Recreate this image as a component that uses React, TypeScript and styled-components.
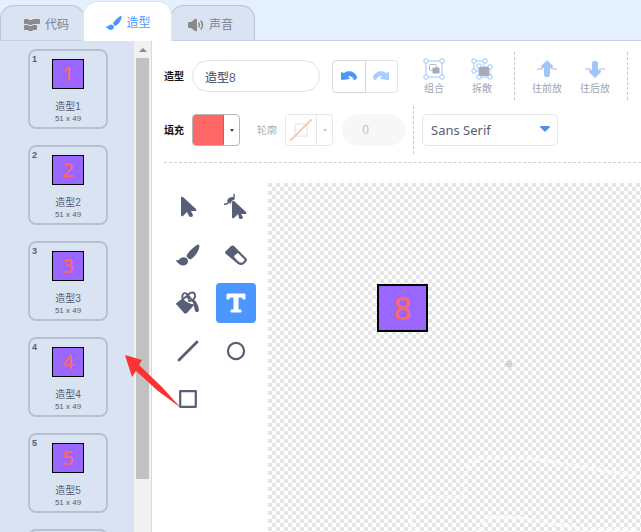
import React from "react";
import styled, { createGlobalStyle, css } from "styled-components";

const ink = "#575e75";
const blue = "#4c97ff";

const GlobalStyle = createGlobalStyle`
  *, *::before, *::after { box-sizing: border-box; }
  body {
    margin: 0;
    background: #fff;
    color: ${ink};
    font-family: "Liberation Sans", "Noto Sans CJK SC", sans-serif;
  }
  button, input, select { font: inherit; color: inherit; margin: 0; }
  button { cursor: pointer; }
  svg { display: block; flex: none; }
`;

const Page = styled.div`
  position: relative;
  display: flex;
  flex-direction: column;
  height: 100vh;
  overflow: hidden;
`;

const TabBar = styled.nav`
  display: flex;
  align-items: flex-end;
  flex: none;
  height: 41px;
  background: #e5f0ff;
  border-bottom: 1px solid #c9d2e0;
`;

const Tab = styled.button<{ $active?: boolean }>`
  display: flex;
  align-items: center;
  justify-content: center;
  gap: 4px;
  width: 85px;
  height: 35px;
  padding: 3px 0 0 8px;
  border: 1px solid #bac5d8;
  border-bottom: 0;
  border-radius: 14px 14px 0 0;
  background: #d9e3f2;
  color: #7a8195;
  font-size: 12px;
  line-height: 16px;
  & + & { margin-left: -2px; }
  &:last-child { padding: 3px 4px 0 0; }
  ${({ $active }) =>
    $active &&
    css`
      z-index: 1;
      width: 89px;
      height: 40px;
      padding: 3px 0 0 2px;
      margin-bottom: -1px;
      border-color: #dfe6f0;
      background: #fff;
      color: ${blue};
    `}
`;

const Body = styled.div`
  display: flex;
  flex: 1;
  min-height: 0;
`;

const Sidebar = styled.aside`
  display: flex;
  flex: none;
  width: 152px;
  background: #f1f1f1;
  border-right: 1px solid #d5dae2;
`;

const CostumeList = styled.ul`
  display: flex;
  flex-direction: column;
  align-items: center;
  gap: 16px;
  width: 134px;
  margin: 0;
  padding: 8px 0 0 2px;
  overflow: hidden;
  list-style: none;
  background: #d9e3f2;
`;

const CostumeCard = styled.button`
  position: relative;
  display: flex;
  flex-direction: column;
  align-items: center;
  width: 80px;
  height: 80px;
  padding: 8px 0 0;
  border: 2px solid #b6c1d3;
  border-radius: 8px;
  background: transparent;
`;

const CardIndex = styled.span`
  position: absolute;
  top: 2px;
  left: 2px;
  font-size: 9px;
  font-weight: 700;
  line-height: 12px;
`;

const DigitBox = styled.span<{ $large?: boolean }>`
  display: flex;
  align-items: center;
  justify-content: center;
  width: ${({ $large }) => ($large ? 51 : 32)}px;
  height: ${({ $large }) => ($large ? 48 : 30)}px;
  border: ${({ $large }) => ($large ? 2 : 1)}px solid #000;
  background: #9966ff;
  color: #ff6666;
  font-family: "Noto Sans", sans-serif;
  font-size: ${({ $large }) => ($large ? 32 : 20)}px;
  font-weight: 500;
  line-height: 1;
`;

const CardName = styled.span`
  margin-top: 12px;
  font-size: 10px;
  line-height: 12px;
`;

const CardSize = styled.span`
  font-size: 8px;
  line-height: 12px;
`;

const ScrollTrack = styled.div`
  display: flex;
  flex-direction: column;
  align-items: center;
  width: 17px;
  padding-top: 7px;
`;

const ScrollThumb = styled.div`
  width: 13px;
  height: 87%;
  margin-top: 6px;
  background: #c1c1c1;
`;

const Editor = styled.main`
  display: flex;
  flex-direction: column;
  flex: 1;
  min-width: 0;
  padding-left: 12px;
`;

const Toolbar = styled.div`
  display: flex;
  flex-direction: column;
  gap: 6px;
  padding: 11px 0 8px;
  border-bottom: 1px dashed #d0d0d0;
`;

const ToolbarRow = styled.div`
  display: flex;
  align-items: center;
  height: 48px;
`;

const FieldLabel = styled.label<{ $muted?: boolean }>`
  flex: none;
  width: 28px;
  padding-top: 2px;
  font-size: 10px;
  font-weight: ${({ $muted }) => ($muted ? 400 : 700)};
  line-height: 16px;
  color: ${({ $muted }) => ($muted ? "#b0b0b0" : "#111")};
  ${({ $muted }) => $muted && "margin-left: 17px;"}
`;

const NameInput = styled.input`
  width: 128px;
  height: 32px;
  padding: 0 12px;
  border: 1px solid #e2e2e6;
  border-radius: 16px;
  outline: 0;
  background: #fff;
  font-size: 12px;
  font-weight: 500;
`;

const ButtonPair = styled.div`
  display: flex;
  width: 66px;
  height: 33px;
  margin: 0 12px;
`;

const HistoryButton = styled.button`
  display: flex;
  align-items: center;
  justify-content: center;
  flex: 1;
  padding: 0;
  border: 1px solid #d2d5db;
  border-radius: 4px 0 0 4px;
  background: #fff;
  &:disabled {
    border-color: #e2e5ec;
    border-left: 0;
    border-radius: 0 4px 4px 0;
    cursor: default;
  }
`;

const ActionButton = styled.button`
  display: flex;
  flex-direction: column;
  align-items: center;
  gap: 2px;
  flex: none;
  width: 48px;
  padding: 2px 0 0;
  border: 0;
  background: none;
  color: #a2a5ae;
  font-size: 10px;
  line-height: 14px;
`;

const Divider = styled.div`
  flex: none;
  width: 1px;
  height: 48px;
  margin: 0 8px;
  border-left: 1px dashed #c8c8c8;
`;

const SwatchButton = styled.button<{ $faded?: boolean }>`
  display: flex;
  flex: none;
  width: 48px;
  height: 32px;
  padding: 0;
  overflow: hidden;
  border: 1px solid ${({ $faded }) => ($faded ? "#e4e6ea" : "#b9b4b6")};
  border-radius: 4px;
  background: #fff;
`;

const SwatchColor = styled.span<{ $color: string; $edge: string }>`
  display: flex;
  align-items: center;
  justify-content: center;
  width: 31px;
  height: 30px;
  border-right: 1px solid ${({ $edge }) => $edge};
  background: ${({ $color }) => $color};
`;

const SwatchCaret = styled.span<{ $faded?: boolean }>`
  align-self: center;
  margin: 0 auto;
  border: 2px solid transparent;
  border-top: 3px solid ${({ $faded }) => ($faded ? "#c5c5c5" : "#444")};
  border-bottom: 0;
`;

const WidthInput = styled.input`
  width: 63px;
  height: 32px;
  margin-left: 9px;
  padding: 0 16px 0 0;
  border: 0;
  border-radius: 16px;
  background: #f7f7f7;
  color: #c2c2c2;
  font-size: 12px;
  text-align: center;
`;

const SelectWrap = styled.div`
  position: relative;
  width: 136px;
  svg { position: absolute; top: 12px; right: 8px; pointer-events: none; }
`;

const FontSelect = styled.select`
  appearance: none;
  display: block;
  width: 100%;
  height: 32px;
  padding: 0 24px 0 8px;
  border: 1px solid #e5e5ea;
  border-radius: 5px;
  background: #fff;
  font-family: "Noto Sans", sans-serif;
  font-size: 13px;
`;

const Workspace = styled.div`
  display: flex;
  flex: 1;
  gap: 12px;
  min-height: 0;
  padding: 20px 0 0 4px;
`;

const ToolGrid = styled.div`
  display: grid;
  grid-template-columns: 40px 40px;
  grid-auto-rows: 40px;
  align-content: start;
  flex: none;
  gap: 8px;
  padding-top: 4px;
`;

const ToolButton = styled.button<{ $selected?: boolean }>`
  display: flex;
  align-items: center;
  justify-content: center;
  padding: 0;
  border: 0;
  border-radius: 4px;
  background: ${({ $selected }) => ($selected ? blue : "transparent")};
`;

const Canvas = styled.section`
  position: relative;
  flex: 1;
  overflow: hidden;
  background: repeating-conic-gradient(#fff 0 25%, #e5e5e5 0 50%) 0 0 / 8px 8px;
`;

const Shape = styled.div`
  position: absolute;
  left: 109px;
  top: 101px;
`;

const OriginMark = styled.svg`
  position: absolute;
  left: 236px;
  top: 176px;
`;

const PointerArrow = styled.svg`
  position: absolute;
  left: 124px;
  top: 354px;
  z-index: 2;
  pointer-events: none;
`;

const CodeIcon = () => (
  <svg width="17" height="14" viewBox="0 0 17 14" fill="#8a8a88">
    <path d="M1 1h3l1 1h3l1-1h6q1 0 1 1v3q0 1-1 1H9L8 7H5L4 6H1Q0 6 0 5V2q0-1 1-1Z" />
    <path d="M1 7h3l1 1h3l1-1h3q1 0 1 1v3q0 1-1 1H9l-1 1H5l-1-1H1q-1 0-1-1V8q0-1 1-1Z" />
  </svg>
);

const BrushIcon = ({ color, size }: { color: string; size: number }) => (
  <svg width={size} height={size} viewBox="0 0 24 24" fill={color}>
    <path d="M23 2c1 1 0 4-1 6-2 4-4 6-7 8-1 1-2 0-3-1-1-1-2-2-1-3C13 8 18 4 21 2c1-1 2 0 2 0Z" />
    <path d="M1 17c2 1 2-1 4-2 3-2 7 0 7 3 0 5-7 6-10 2-1-1-3-3-1-3Z" />
  </svg>
);

const SoundIcon = () => (
  <svg width="17" height="14" viewBox="0 0 17 14">
    <path d="M1 4h2l4-3q2-1 2 1v10q0 2-2 1L3 10H1q-1 0-1-1V5q0-1 1-1Z" fill="#8a8a88" />
    <path d="M11 5q1 2 0 4M13 3q3 4 0 8" fill="none" stroke="#8a8a88" strokeWidth="1.5" strokeLinecap="round" />
  </svg>
);

const UndoIcon = ({ redo }: { redo?: boolean }) => (
  <svg width="16" height="10" viewBox="0 0 16 10">
    <path
      transform={redo ? "translate(16 0) scale(-1 1)" : undefined}
      d="M0 1l3 1c4-3 11-2 13 4 0 2-1 3-3 3-1-3-3-4-6-4l2 3-8 1q-1 0-1-1Z"
      fill={redo ? "#a9cbff" : blue}
    />
  </svg>
);

const corners = (points: number[][]) =>
  points.map(([x, y]) => (
    <rect key={`${x}-${y}`} x={x} y={y} width="4" height="4" rx="1" fill="#fff" stroke="#a0c5f8" />
  ));

const GroupIcon = () => (
  <svg width="22" height="22" viewBox="0 0 22 22">
    <path d="M3 3h16v16H3z" fill="none" stroke="#a0c5f8" />
    <rect x="6.5" y="6.5" width="7" height="6" rx="1" fill="#fff" stroke="#b6b9c2" />
    <rect x="9.5" y="9.5" width="7" height="6" rx="1" fill="#a7aab5" />
    {corners([[1, 1], [17, 1], [1, 17], [17, 17]])}
  </svg>
);

const UngroupIcon = () => (
  <svg width="22" height="22" viewBox="0 0 22 22">
    <path d="M3 3h10v10H3z" fill="none" stroke="#a0c5f8" />
    {corners([[1, 1], [12, 1], [1, 11]])}
    <path d="M8 9h11v10H8z" fill="#fff" stroke="#a0c5f8" />
    {corners([[6, 6], [17, 7], [6, 17], [17, 17]])}
    <rect x="8" y="9" width="10" height="9" rx="1" fill="#a7aab5" />
  </svg>
);

const OrderIcon = ({ back }: { back?: boolean }) => (
  <svg width="22" height="22" viewBox="0 0 22 22">
    <path d="M1 11h6M15 11h6" stroke="#b5b5b8" />
    <path
      transform={back ? "translate(0 22) scale(1 -1)" : undefined}
      d="M11 2l6 6q0 2-1 2h-2v7q0 2-3 2t-3-2v-7H6q-1 0-1-2Z"
      fill="#a0c5fa"
    />
  </svg>
);

const toolGlyphs: Record<string, React.ReactNode> = {
  选择: <path d="M5 3Q5 1 7 2l13 12q1 2-1 2h-4l2 4q0 2-2 2t-2-1l-2-4-4 4q-2 1-2-1Z" fill={ink} />,
  变形: (
    <>
      <path d="M8 8q0-3 2-2l12 11q1 2-1 2h-4l2 3q0 2-2 2t-2-1l-1-4-4 4q-2 1-2-1Z" fill={ink} />
      <path d="M0 9q4 1 5-3M8 3q3 0 2-4" fill="none" stroke={ink} strokeWidth="1.4" />
      <path d="M3 6q1-4 6-4l2 1-1 2q-3 0-3 4Z" fill={ink} />
    </>
  ),
  橡皮擦: (
    <>
      <path d="M2 8l5-5q2-1 3 0l12 12q2 2 0 4l-2 2q-3 2-6 0L2 11q-2-2 0-3Z" fill={ink} />
      <path d="M10 14q0-2 4-4l6 6q1 1 0 2-2 3-5 1Z" fill="#fff" />
    </>
  ),
  填充: (
    <>
      <path d="M1 12l6-4q6 6 12 5l-8 9q-2 1-3 0l-7-8q-1-1 0-2Z" fill={ink} />
      <path d="M1 13l11-9 7 9M7 9C5 3 8 1 11 3l2 6M11 6c2-5 7-6 8-2s-4 6-6 6" fill="none" stroke={ink} strokeWidth="1.8" strokeLinecap="round" />
      <path d="M17 8q5 3 6 11-1 4-4 1-1-4-2-12Z" fill={ink} />
    </>
  ),
  文本: (
    <path
      d="M3 3h18v5h-2l-1-2h-4v13h3v2H7v-2h3V6H6L5 8H3Z"
      fill="#fff"
      stroke="#fff"
      strokeLinejoin="round"
    />
  ),
  线段: <path d="M3 21L21 3" stroke={ink} strokeWidth="2.8" strokeLinecap="round" />,
  圆: <circle cx="12" cy="12" r="8.8" fill="none" stroke={ink} strokeWidth="2.4" />,
  矩形: <path d="M3.5 3.5h17v17h-17z" fill="none" stroke={ink} strokeWidth="2.4" strokeLinejoin="round" />,
};

const tools = ["选择", "变形", "画笔", "橡皮擦", "填充", "文本", "线段", "圆", "矩形"];

const ToolGlyph = ({ name }: { name: string }) => {
  if (name === "画笔") return <BrushIcon color={ink} size={24} />;
  const size = name === "圆" || name === "矩形" ? 22 : 24;
  return (
    <svg width={size} height={size} viewBox="0 0 24 24" overflow="visible">
      {toolGlyphs[name]}
    </svg>
  );
};

const ghostLines = [
  "M150 349l-8-10 4-17 18-8h33V287l14-12h50l134 23",
  "M210 349l10-14h30l70 12h50",
];

const Ghost = styled.svg`
  position: absolute;
  inset: 0;
  width: 100%;
  height: 100%;
`;

export default function App() {
  return (
    <>
      <GlobalStyle />
      <Page>
        <TabBar>
          <Tab><CodeIcon />代码</Tab>
          <Tab $active><BrushIcon color={blue} size={16} />造型</Tab>
          <Tab><SoundIcon />声音</Tab>
        </TabBar>
        <Body>
          <Sidebar>
            <CostumeList>
              {[1, 2, 3, 4, 5].map((n) => (
                <li key={n}>
                  <CostumeCard>
                    <CardIndex>{n}</CardIndex>
                    <DigitBox>{n}</DigitBox>
                    <CardName>造型{n}</CardName>
                    <CardSize>51 x 49</CardSize>
                  </CostumeCard>
                </li>
              ))}
              <li><CostumeCard aria-label="造型" /></li>
            </CostumeList>
            <ScrollTrack>
              <svg width="8" height="4" viewBox="0 0 8 4"><path d="M0 4l4-4 4 4Z" fill="#8b8b8b" /></svg>
              <ScrollThumb />
            </ScrollTrack>
          </Sidebar>
          <Editor>
            <Toolbar>
              <ToolbarRow>
                <FieldLabel htmlFor="costume-name">造型</FieldLabel>
                <NameInput id="costume-name" defaultValue="造型8" />
                <ButtonPair>
                  <HistoryButton aria-label="撤销"><UndoIcon /></HistoryButton>
                  <HistoryButton aria-label="重做" disabled><UndoIcon redo /></HistoryButton>
                </ButtonPair>
                <ActionButton><GroupIcon />组合</ActionButton>
                <ActionButton><UngroupIcon />拆散</ActionButton>
                <Divider />
                <ActionButton><OrderIcon />往前放</ActionButton>
                <ActionButton><OrderIcon back />往后放</ActionButton>
                <Divider />
              </ToolbarRow>
              <ToolbarRow>
                <FieldLabel htmlFor="fill">填充</FieldLabel>
                <SwatchButton id="fill">
                  <SwatchColor $color="#ff6666" $edge="#c95c5c" />
                  <SwatchCaret />
                </SwatchButton>
                <FieldLabel htmlFor="outline" $muted>轮廓</FieldLabel>
                <SwatchButton id="outline" $faded>
                  <SwatchColor $color="#fff" $edge="#e4e6ea">
                    <svg width="24" height="24" viewBox="0 0 24 24">
                      <path d="M6 6h12v12H6z" fill="none" stroke="#e1e1e7" />
                      <path d="M2 22L22 2" stroke="#ffc6ae" strokeWidth="2" strokeLinecap="round" />
                    </svg>
                  </SwatchColor>
                  <SwatchCaret $faded />
                </SwatchButton>
                <WidthInput aria-label="轮廓宽度" defaultValue="0" disabled />
                <Divider />
                <SelectWrap>
                  <FontSelect aria-label="字体" defaultValue="Sans Serif">
                    <option>Sans Serif</option>
                  </FontSelect>
                  <svg width="10" height="6" viewBox="0 0 10 6">
                    <path d="M1 0h8q2 1 0 2L6 5q-1 1-2 0L1 2Q-1 1 1 0Z" fill="#4c8ee8" />
                  </svg>
                </SelectWrap>
              </ToolbarRow>
            </Toolbar>
            <Workspace>
              <ToolGrid>
                {tools.map((name) => (
                  <ToolButton key={name} aria-label={name} $selected={name === "文本"}>
                    <ToolGlyph name={name} />
                  </ToolButton>
                ))}
              </ToolGrid>
              <Canvas>
                <Ghost>
                  {ghostLines.map((d) => (
                    <path key={d} d={d} fill="none" stroke="#fff" strokeOpacity="0.6" strokeWidth="4" strokeDasharray="5 3" strokeLinejoin="round" />
                  ))}
                </Ghost>
                <Shape><DigitBox $large>8</DigitBox></Shape>
                <OriginMark width="10" height="10" viewBox="0 0 10 10">
                  <circle cx="5" cy="5" r="3" fill="#dcdcdc" stroke="#cfcfcf" />
                  <path d="M5 1v8M1 5h8" stroke="#cfcfcf" />
                </OriginMark>
              </Canvas>
            </Workspace>
          </Editor>
        </Body>
        <PointerArrow width="58" height="56" viewBox="0 0 58 56">
          <path d="M1 1l17 5-3 5 23 22 19 21-23-17-22-20-4 6Z" fill="#fa3434" />
        </PointerArrow>
      </Page>
    </>
  );
}
